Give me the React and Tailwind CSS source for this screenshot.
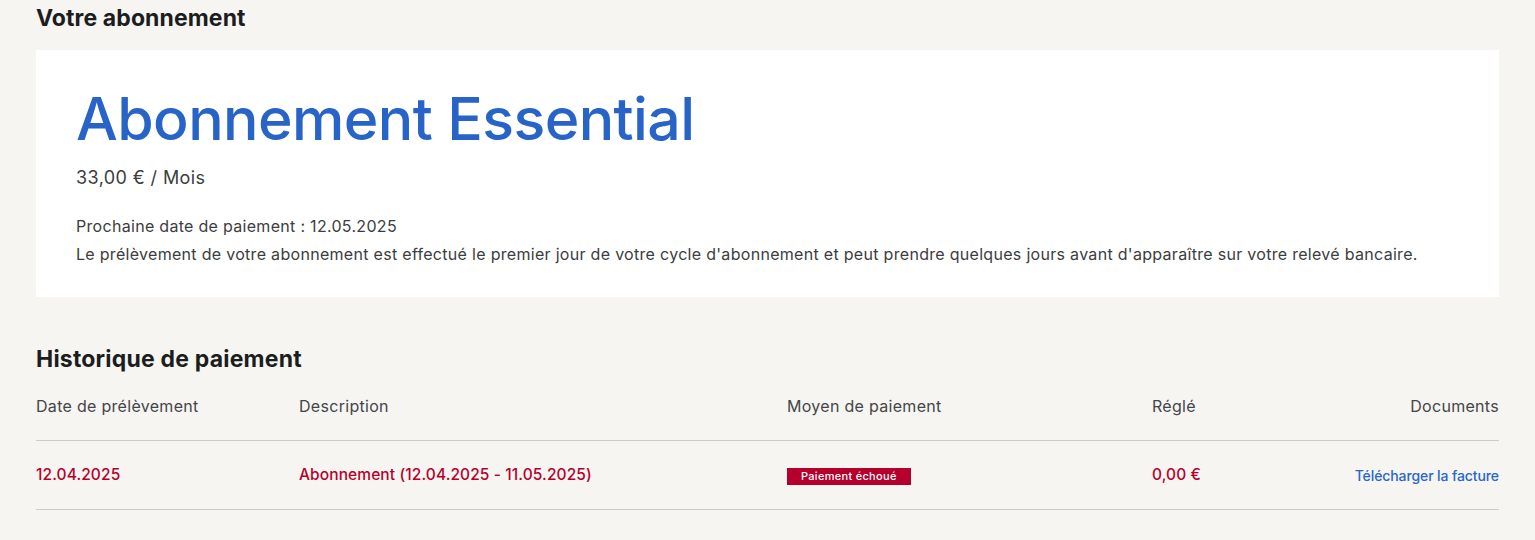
import React from "react";

const payments = [
    {
        date: "12.04.2025",
        description: "Abonnement (12.04.2025 - 11.05.2025)",
        status: "Paiement échoué",
        amount: "0,00 €",
    },
];

const App = () => {
    return (
        <div className="min-h-screen bg-[#f6f5f2] font-['Inter',sans-serif] antialiased">
            <div className="mx-[36px] pt-[4px]">
                <h2 className="text-[23px] leading-[28px] font-bold text-[#1b1d20] tracking-[0.1px]">
                    Votre abonnement
                </h2>

                <div className="mt-[18px] bg-white px-[40px] pt-[33px] pb-[29px]">
                    <h1 className="text-[59px] leading-[72px] font-medium text-[#2864c7] tracking-[-0.6px]">
                        Abonnement Essential
                    </h1>
                    <p className="mt-[10px] text-[18px] leading-[26px] text-[#3b3d40] tracking-[0.4px]">33,00 € / Mois</p>
                    <div className="mt-[21px] text-[16px] leading-[28px] text-[#3b3d40] tracking-[0.3px]">
                        <p>Prochaine date de paiement : 12.05.2025</p>
                        <p>
                            Le prélèvement de votre abonnement est effectué le premier jour de votre cycle d'abonnement et peut prendre quelques jours avant d'apparaître sur votre relevé bancaire.
                        </p>
                    </div>
                </div>

                <h2 className="mt-[48px] text-[23px] leading-[28px] font-bold text-[#1b1d20] tracking-[0.2px]">
                    Historique de paiement
                </h2>

                <div className="mt-[22px]">
                    <div className="grid grid-cols-[263px_488px_365px_1fr_auto] border-b border-[#cccbc8] pb-[23px] text-[16px] leading-[22px] text-[#444548] tracking-[0.3px]">
                        <span>Date de prélèvement</span>
                        <span>Description</span>
                        <span>Moyen de paiement</span>
                        <span>Réglé</span>
                        <span className="text-right">Documents</span>
                    </div>
                    {payments.map((p) => (
                        <div
                            key={p.date}
                            className="grid grid-cols-[263px_488px_365px_1fr_auto] items-center border-b border-[#cccbc8] h-[69px] text-[15.5px] font-medium text-[#b5002b] tracking-[0.1px]"
                        >
                            <span>{p.date}</span>
                            <span>{p.description}</span>
                            <span>
                                <span className="inline-block bg-[#b5002b] px-[14px] text-[11px] leading-[17px] font-medium text-white tracking-[0.3px]">
                                    {p.status}
                                </span>
                            </span>
                            <span>{p.amount}</span>
                            <a href="#" className="text-right text-[14px] font-medium text-[#2a66c9] tracking-[-0.1px]">
                                Télécharger la facture
                            </a>
                        </div>
                    ))}
                </div>
            </div>
        </div>
    );
};

export default App;
